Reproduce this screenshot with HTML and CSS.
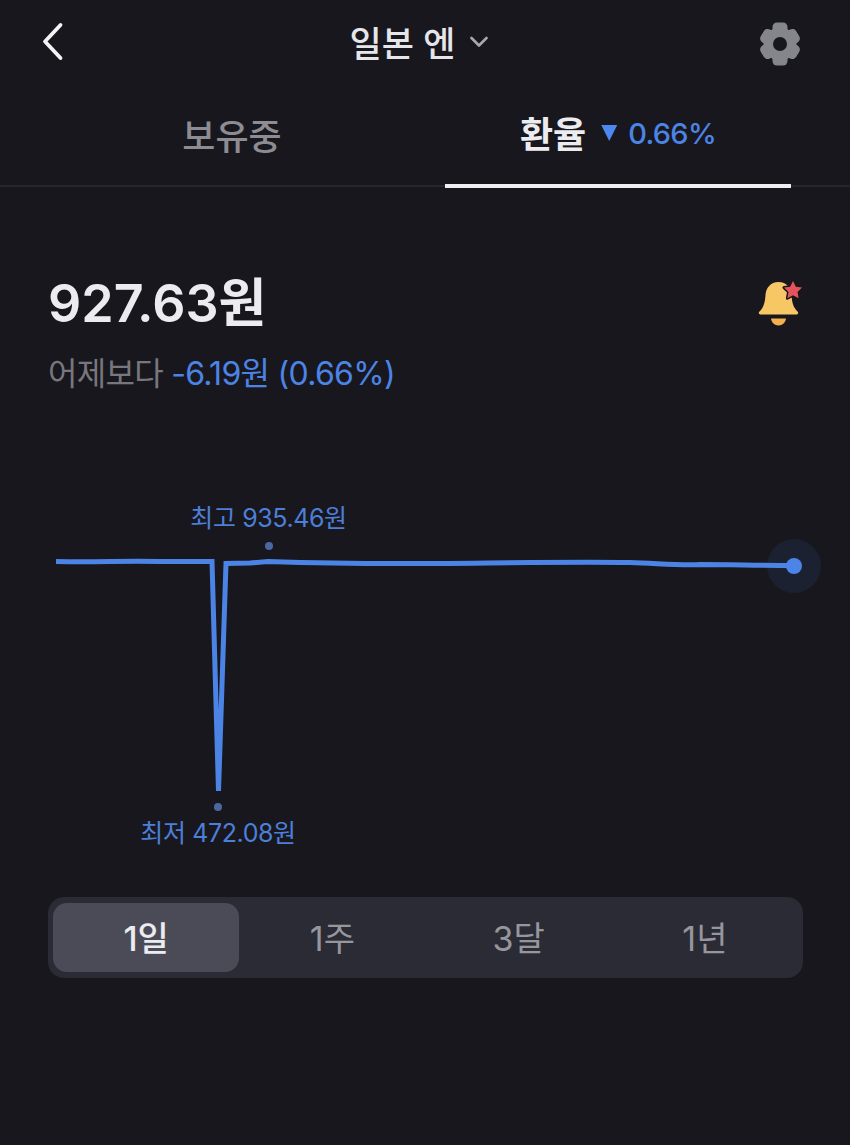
FILE: index.html
```html
<!DOCTYPE html>
<html lang="ko">
<head>
<meta charset="utf-8">
<title>일본 엔</title>
<link rel="stylesheet" href="styles.css">
</head>
<body>
<main class="screen">
  <header class="topbar">
    <svg class="back" width="24" height="40" viewBox="0 0 24 40"><path d="M20.500 4 5 20.500 20.500 37" fill="none" stroke="#f4f4f6" stroke-width="3.800" stroke-linecap="round" stroke-linejoin="round"/></svg>
    <div class="title"><span>일본 엔</span>
      <svg width="18" height="12" viewBox="0 0 18 12"><path d="M1.500 2 9 9.500 16.500 2" fill="none" stroke="#a8a8ae" stroke-width="2.600" stroke-linecap="round" stroke-linejoin="round"/></svg>
    </div>
    <svg class="gear" width="44" height="46" viewBox="0 0 44 46">
      <g fill="#85858c">
        <circle cx="22" cy="23" r="16.500"/>
        <rect x="14.500" y="1.500" width="15" height="43" rx="4.500"/>
        <rect x="14.500" y="2.500" width="15" height="41" rx="4.500" transform="rotate(60 22 23)"/>
        <rect x="14.500" y="2.500" width="15" height="41" rx="4.500" transform="rotate(120 22 23)"/>
      </g>
      <circle cx="22" cy="23" r="7" fill="#18171e"/>
    </svg>
  </header>

  <nav class="tabs">
    <div class="tab">보유중</div>
    <div class="tab is-active"><strong>환율</strong><span class="rate"><i class="tri"></i>0.66%</span></div>
  </nav>

  <section class="summary">
    <div class="summary-text">
      <h1 class="price">927.63원</h1>
      <p class="delta">어제보다 <span class="blue">-6.19원 (0.66%)</span></p>
    </div>
    <svg class="bell" width="46" height="46" viewBox="0 0 46 46">
      <path fill="#f8c765" d="M20.500 1C12.500 1 8 7 7.500 14 7 22 5.500 26.500 1.500 30.500 0 32 1 33.500 3 33.500H38C40 33.500 41 32 39.500 30.500 35.500 26.500 34 22 33.500 14 33 7 28.500 1 20.500 1z"/>
      <path fill="#f3b04f" d="M13 37.500H28C27.500 41.500 24.500 44.500 20.500 44.500S13.500 41.500 13 37.500z"/>
      <path fill="#e5545c" stroke="#18171e" stroke-width="3" stroke-linejoin="round" paint-order="stroke" d="M35 0l2.800 5.800 6.200.8-4.500 4.300 1.100 6.300L35 14.200l-5.600 3 1.100-6.300-4.500-4.300 6.200-.8z"/>
    </svg>
  </section>

  <section class="chart">
    <svg class="chart-svg" width="850" height="370" viewBox="0 490 850 370">
      <circle cx="794" cy="565" r="27" fill="#1b2130"/>
      <path d="M56 560.500 C100 561.500 120 559.500 160 560.500 L212 560.500 L218.500 790 L226 562.500 L250 562 L268 560.500 C300 561.500 340 562.500 400 562.500 C470 562.500 560 560.500 630 561.500 C660 562.500 680 564.500 700 563.500 C730 563.500 760 564.500 794 564.500" fill="none" stroke="#4c84e6" stroke-width="5"/>
      <circle cx="794" cy="565" r="8" fill="#4c84ea"/>
      <circle cx="269" cy="545" r="4" fill="#4a689f"/>
      <circle cx="218" cy="806" r="4" fill="#4a689f"/>
    </svg>
    <span class="mark mark-high">최고 935.46원</span>
    <span class="mark mark-low">최저 472.08원</span>
  </section>

  <div class="segments">
    <div class="seg is-active">1일</div>
    <div class="seg">1주</div>
    <div class="seg">3달</div>
    <div class="seg">1년</div>
  </div>
</main>
</body>
</html>
```
FILE: styles.css
```css
* { box-sizing: border-box; }
html, body { margin: 0; height: 100%; }
body {
  background: #18171e;
  font-family: Inter, "Noto Sans CJK KR", sans-serif;
  color: #ececf0;
}
.screen { width: 850px; height: 1145px; overflow: hidden; }

.topbar {
  height: 88px;
  padding: 0 48px 0 40px;
  display: flex;
  align-items: center;
  justify-content: space-between;
}
.back { margin-bottom: 7px; }
.title {
  display: flex;
  align-items: center;
  gap: 15px;
  font-size: 35px;
  font-weight: 500;
  color: #e6e6ea;
  margin-left: 16px;
  margin-bottom: 5px;
}

.tabs {
  height: 99px;
  padding: 0 59px;
  display: grid;
  grid-template-columns: 346px 346px;
  column-gap: 40px;
  border-bottom: 2px solid #26262d;
}
.tab {
  display: flex;
  align-items: center;
  justify-content: center;
  height: 100px;
  padding-bottom: 8px;
  font-size: 36px;
  font-weight: 500;
  color: #8c8c92;
}
.tab.is-active { border-bottom: 4px solid #efeff2; }
.tab strong { font-weight: 700; color: #ececf0; }
.rate {
  display: flex;
  align-items: center;
  margin-left: 15px;
  padding-top: 2px;
  font-size: 29px;
  font-weight: 500;
  letter-spacing: -0.7px;
  color: #4c84e6;
}
.tri {
  width: 16px;
  height: 16px;
  margin-right: 11px;
  background: #4c88f0;
  clip-path: polygon(0 0, 100% 0, 50% 100%);
}

.summary {
  padding: 87px 46px 0 48px;
  display: flex;
  justify-content: space-between;
  align-items: flex-start;
}
.price {
  margin: 0;
  font-size: 52px;
  line-height: 60px;
  font-weight: 600;
  color: #ececf0;
}
.delta {
  margin: 20px 0 0;
  font-size: 32px;
  line-height: 40px;
  letter-spacing: -0.7px;
  color: #77777d;
}
.blue { color: #4c84e6; }
.bell { margin-top: 7px; }

.chart { position: relative; height: 370px; margin-top: 97px; }
.chart-svg { display: block; }
.mark {
  position: absolute;
  transform: translateX(-50%);
  font-size: 25px;
  line-height: 32px;
  letter-spacing: -0.4px;
  white-space: nowrap;
  color: #4c7fd8;
}
.mark-high { left: 268.500px; top: 11px; }
.mark-low { left: 218px; top: 326px; }

.segments {
  margin: 36px 47px 0 48px;
  height: 81px;
  padding: 6px 5px;
  display: grid;
  grid-template-columns: repeat(4, 1fr);
  background: #2b2b35;
  border-radius: 16px;
}
.seg {
  display: flex;
  align-items: center;
  justify-content: center;
  border-radius: 14px;
  font-size: 34px;
  padding-bottom: 2px;
  color: #96969c;
}
.seg.is-active { background: #4b4b57; color: #ececf0; font-weight: 500; }
```
